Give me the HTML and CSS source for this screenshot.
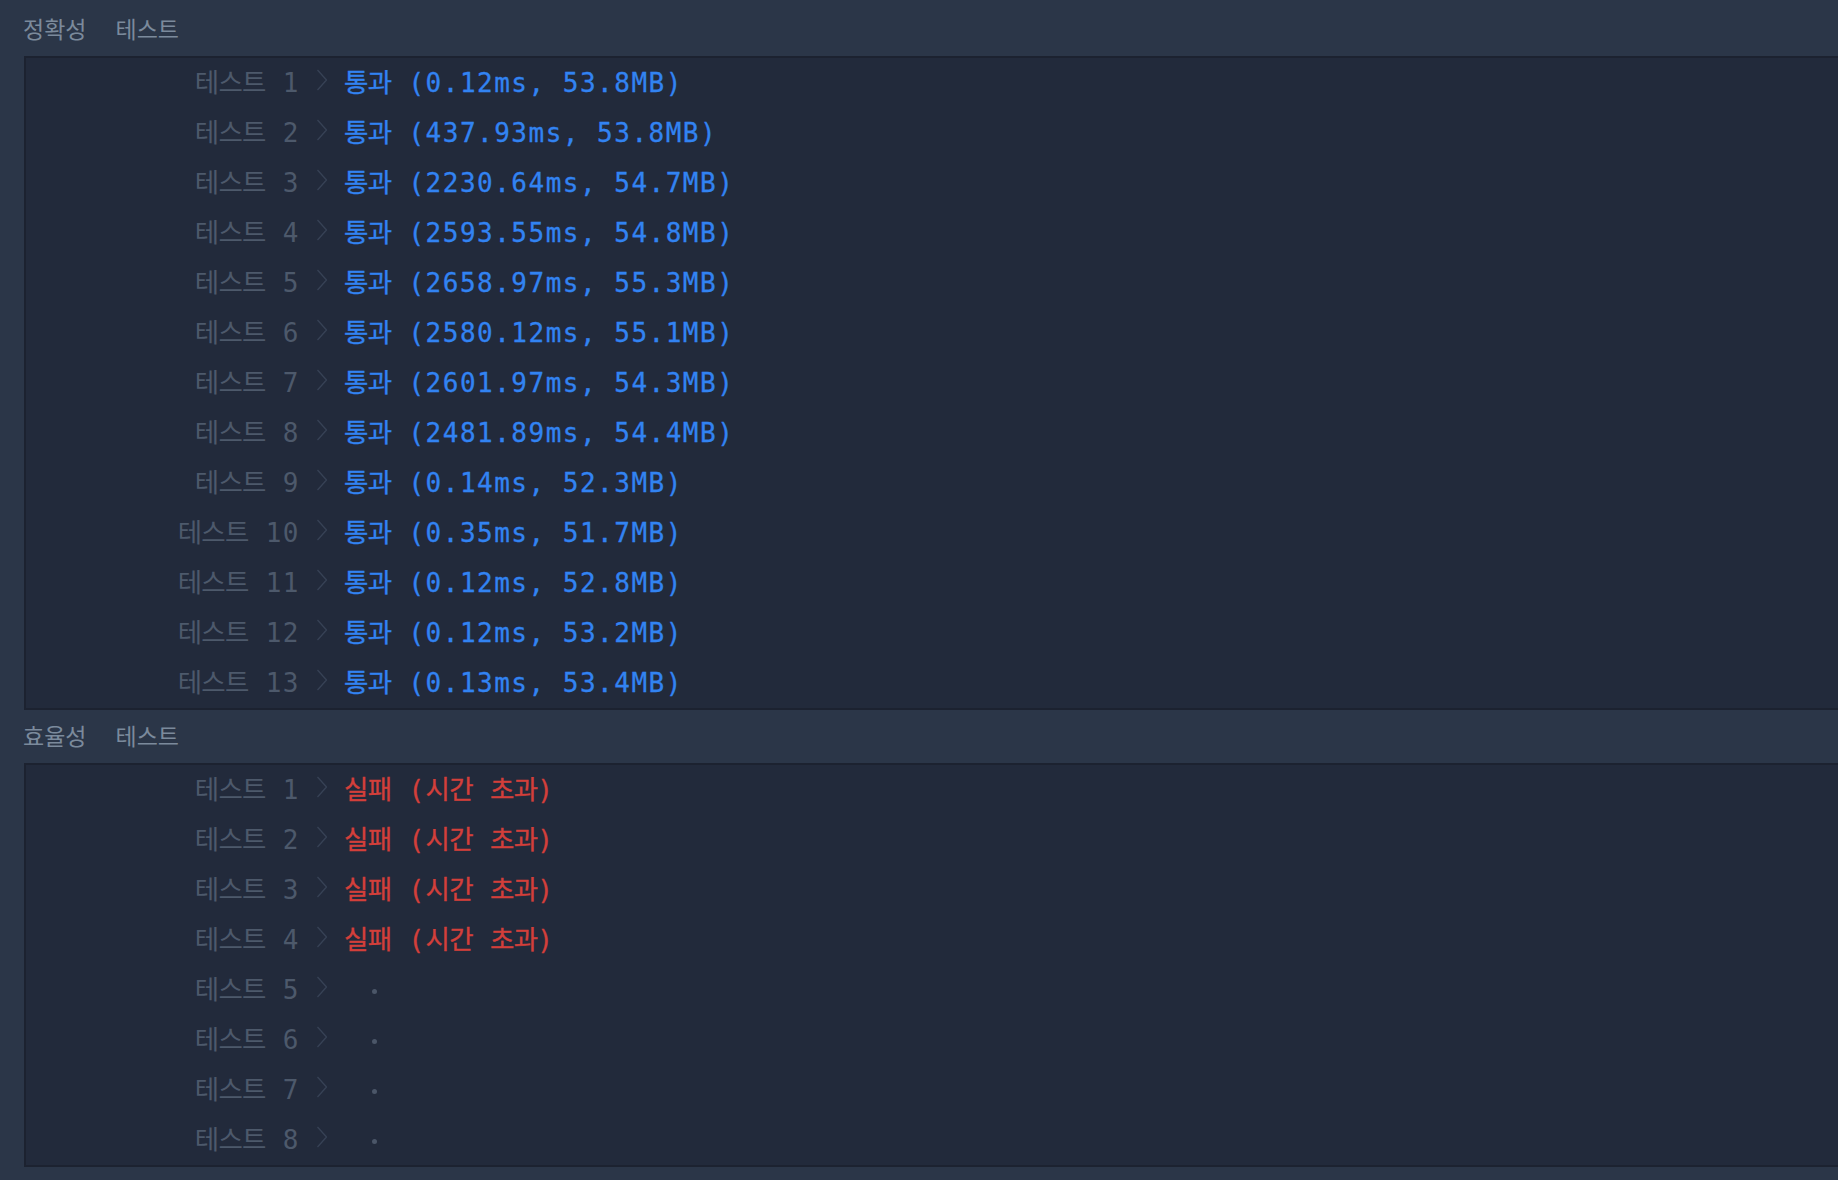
FILE: index.html
```html
<!DOCTYPE html>
<html lang="ko">
<head>
<meta charset="utf-8">
<title>채점 결과</title>
<link rel="stylesheet" href="styles.css">
</head>
<body>
<div class="page">
  <div class="sec-head head-first"><span>정확성</span><span>테스트</span></div>
  <div class="panel">
    <div class="row"><span class="label"><span class="ko">테스트</span> 1</span><svg class="chev" viewBox="0 0 10 21"><polyline points="0.5,0.5 9.5,10.5 0.5,20.5"/></svg><span class="res pass"><span class="ko">통과</span> (0.12ms, 53.8MB)</span></div>
    <div class="row"><span class="label"><span class="ko">테스트</span> 2</span><svg class="chev" viewBox="0 0 10 21"><polyline points="0.5,0.5 9.5,10.5 0.5,20.5"/></svg><span class="res pass"><span class="ko">통과</span> (437.93ms, 53.8MB)</span></div>
    <div class="row"><span class="label"><span class="ko">테스트</span> 3</span><svg class="chev" viewBox="0 0 10 21"><polyline points="0.5,0.5 9.5,10.5 0.5,20.5"/></svg><span class="res pass"><span class="ko">통과</span> (2230.64ms, 54.7MB)</span></div>
    <div class="row"><span class="label"><span class="ko">테스트</span> 4</span><svg class="chev" viewBox="0 0 10 21"><polyline points="0.5,0.5 9.5,10.5 0.5,20.5"/></svg><span class="res pass"><span class="ko">통과</span> (2593.55ms, 54.8MB)</span></div>
    <div class="row"><span class="label"><span class="ko">테스트</span> 5</span><svg class="chev" viewBox="0 0 10 21"><polyline points="0.5,0.5 9.5,10.5 0.5,20.5"/></svg><span class="res pass"><span class="ko">통과</span> (2658.97ms, 55.3MB)</span></div>
    <div class="row"><span class="label"><span class="ko">테스트</span> 6</span><svg class="chev" viewBox="0 0 10 21"><polyline points="0.5,0.5 9.5,10.5 0.5,20.5"/></svg><span class="res pass"><span class="ko">통과</span> (2580.12ms, 55.1MB)</span></div>
    <div class="row"><span class="label"><span class="ko">테스트</span> 7</span><svg class="chev" viewBox="0 0 10 21"><polyline points="0.5,0.5 9.5,10.5 0.5,20.5"/></svg><span class="res pass"><span class="ko">통과</span> (2601.97ms, 54.3MB)</span></div>
    <div class="row"><span class="label"><span class="ko">테스트</span> 8</span><svg class="chev" viewBox="0 0 10 21"><polyline points="0.5,0.5 9.5,10.5 0.5,20.5"/></svg><span class="res pass"><span class="ko">통과</span> (2481.89ms, 54.4MB)</span></div>
    <div class="row"><span class="label"><span class="ko">테스트</span> 9</span><svg class="chev" viewBox="0 0 10 21"><polyline points="0.5,0.5 9.5,10.5 0.5,20.5"/></svg><span class="res pass"><span class="ko">통과</span> (0.14ms, 52.3MB)</span></div>
    <div class="row"><span class="label"><span class="ko">테스트</span> 10</span><svg class="chev" viewBox="0 0 10 21"><polyline points="0.5,0.5 9.5,10.5 0.5,20.5"/></svg><span class="res pass"><span class="ko">통과</span> (0.35ms, 51.7MB)</span></div>
    <div class="row"><span class="label"><span class="ko">테스트</span> 11</span><svg class="chev" viewBox="0 0 10 21"><polyline points="0.5,0.5 9.5,10.5 0.5,20.5"/></svg><span class="res pass"><span class="ko">통과</span> (0.12ms, 52.8MB)</span></div>
    <div class="row"><span class="label"><span class="ko">테스트</span> 12</span><svg class="chev" viewBox="0 0 10 21"><polyline points="0.5,0.5 9.5,10.5 0.5,20.5"/></svg><span class="res pass"><span class="ko">통과</span> (0.12ms, 53.2MB)</span></div>
    <div class="row"><span class="label"><span class="ko">테스트</span> 13</span><svg class="chev" viewBox="0 0 10 21"><polyline points="0.5,0.5 9.5,10.5 0.5,20.5"/></svg><span class="res pass"><span class="ko">통과</span> (0.13ms, 53.4MB)</span></div>
  </div>
  <div class="sec-head head-second"><span>효율성</span><span>테스트</span></div>
  <div class="panel">
    <div class="row"><span class="label"><span class="ko">테스트</span> 1</span><svg class="chev" viewBox="0 0 10 21"><polyline points="0.5,0.5 9.5,10.5 0.5,20.5"/></svg><span class="res fail"><span class="ko">실패</span> (<span class="ko">시간</span> <span class="ko">초과</span>)</span></div>
    <div class="row"><span class="label"><span class="ko">테스트</span> 2</span><svg class="chev" viewBox="0 0 10 21"><polyline points="0.5,0.5 9.5,10.5 0.5,20.5"/></svg><span class="res fail"><span class="ko">실패</span> (<span class="ko">시간</span> <span class="ko">초과</span>)</span></div>
    <div class="row"><span class="label"><span class="ko">테스트</span> 3</span><svg class="chev" viewBox="0 0 10 21"><polyline points="0.5,0.5 9.5,10.5 0.5,20.5"/></svg><span class="res fail"><span class="ko">실패</span> (<span class="ko">시간</span> <span class="ko">초과</span>)</span></div>
    <div class="row"><span class="label"><span class="ko">테스트</span> 4</span><svg class="chev" viewBox="0 0 10 21"><polyline points="0.5,0.5 9.5,10.5 0.5,20.5"/></svg><span class="res fail"><span class="ko">실패</span> (<span class="ko">시간</span> <span class="ko">초과</span>)</span></div>
    <div class="row"><span class="label"><span class="ko">테스트</span> 5</span><svg class="chev" viewBox="0 0 10 21"><polyline points="0.5,0.5 9.5,10.5 0.5,20.5"/></svg><span class="wait"><span class="dot"></span></span></div>
    <div class="row"><span class="label"><span class="ko">테스트</span> 6</span><svg class="chev" viewBox="0 0 10 21"><polyline points="0.5,0.5 9.5,10.5 0.5,20.5"/></svg><span class="wait"><span class="dot"></span></span></div>
    <div class="row"><span class="label"><span class="ko">테스트</span> 7</span><svg class="chev" viewBox="0 0 10 21"><polyline points="0.5,0.5 9.5,10.5 0.5,20.5"/></svg><span class="wait"><span class="dot"></span></span></div>
    <div class="row"><span class="label"><span class="ko">테스트</span> 8</span><svg class="chev" viewBox="0 0 10 21"><polyline points="0.5,0.5 9.5,10.5 0.5,20.5"/></svg><span class="wait"><span class="dot"></span></span></div>
  </div>
</div>
</body>
</html>
```
FILE: styles.css
```css
html, body {
  margin: 0;
  padding: 0;
  background: #2b3648;
  height: 100%;
  overflow: hidden;
}

.page {
  display: flex;
  flex-direction: column;
}

.sec-head {
  box-sizing: border-box;
  height: 50px;
  display: flex;
  align-items: center;
  gap: 29px;
  padding-left: 23px;
  font-family: "Noto Sans CJK KR", "Noto Sans", sans-serif;
  font-size: 23px;
  color: #7b8a9c;
}

.head-first {
  height: 56px;
}

.head-second {
  height: 53px;
  padding-bottom: 4px;
}

.panel {
  margin-left: 24px;
  background: #222a3b;
  border-top: 2px solid #1c2230;
  border-bottom: 2px solid #1c2230;
  border-left: 2px solid #1c2230;
}

.row {
  box-sizing: border-box;
  height: 50px;
  padding-bottom: 6px;
  display: flex;
  align-items: center;
  font-family: "DejaVu Sans Mono", "Liberation Mono", monospace;
  font-size: 26px;
  letter-spacing: 1.5px;
  white-space: pre;
}

.ko {
  font-family: "Noto Sans CJK KR", sans-serif;
  font-size: 26.5px;
  letter-spacing: -0.75px;
}

.label {
  width: 274px;
  text-align: right;
  color: #4d596b;
}

.chev {
  width: 10px;
  height: 22px;
  margin-left: 17px;
  margin-right: 17px;
  margin-top: 0;
  fill: none;
  stroke: #374255;
  stroke-width: 1.3;
}

.res {
  display: block;
  -webkit-text-stroke: 0.3px currentColor;
}

.pass {
  color: #3283f2;
}

.fail {
  color: #d33f3a;
}

.wait {
  height: 44px;
  display: flex;
  align-items: center;
}

.dot {
  width: 5px;
  height: 5px;
  border-radius: 50%;
  background: #4b5668;
  margin-left: 28px;
  margin-top: 9px;
}
```
